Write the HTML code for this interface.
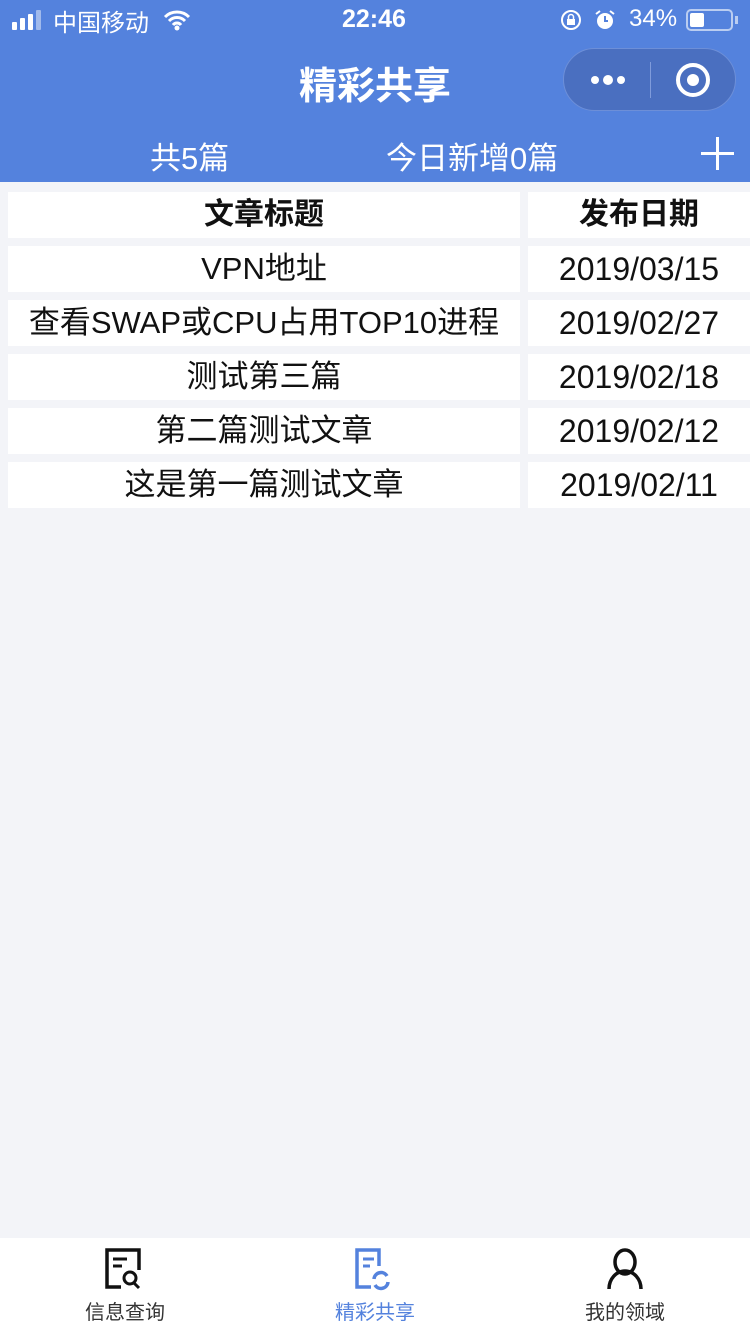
<!DOCTYPE html>
<html><head><meta charset="utf-8"><style>
*{margin:0;padding:0;box-sizing:border-box}
html,body{width:750px;height:1334px;overflow:hidden}
body{background:#f3f4f8;font-family:"Liberation Sans","Noto Sans CJK SC",sans-serif;position:relative}
.hdr{position:absolute;left:0;top:0;width:750px;height:182px;background:#5482dd;color:#fff}
.abs{position:absolute}
.row{position:absolute;left:0;width:750px;height:46px}
.c1{position:absolute;left:8px;width:512px;height:46px;background:#fff;text-align:center;line-height:46px;font-size:31px;color:#111;white-space:nowrap}
.c2{position:absolute;left:528px;width:222px;height:46px;background:#fff;text-align:center;line-height:46px;font-size:32px;color:#111}
.b{font-weight:bold;font-size:30px}
.tab{position:absolute;top:1238px;left:0;width:750px;height:96px;background:#fff}
.lbl{position:absolute;top:58px;font-size:20px;width:150px;text-align:center}
</style></head><body>
<div class="hdr">
 <div class="abs" style="left:12px;top:10px;display:flex;align-items:flex-end;gap:3px;height:20px">
  <div style="width:5px;height:8px;background:#fff;border-radius:1px"></div><div style="width:5px;height:12px;background:#fff;border-radius:1px"></div><div style="width:5px;height:16px;background:#fff;border-radius:1px"></div><div style="width:5px;height:20px;background:rgba(255,255,255,.45);border-radius:1px"></div>
 </div>
 <div class="abs" style="left:53px;top:3px;font-size:24px">中国移动</div>
 <svg class="abs" style="left:163px;top:9px" width="28" height="22" viewBox="0 0 28 22"><path d="M2 8a17 17 0 0 1 24 0M6 12a11 11 0 0 1 16 0M10 16a5 5 0 0 1 8 0" stroke="#fff" stroke-width="3" fill="none"/><circle cx="14" cy="19" r="2.5" fill="#fff"/></svg>
 <div class="abs" style="left:342px;top:5px;font-size:25px;font-weight:bold">22:46</div>
 <svg class="abs" style="left:560px;top:9px" width="22" height="22"><circle cx="11" cy="11" r="9" stroke="#fff" stroke-width="2" fill="none"/><rect x="7" y="10" width="8" height="6" fill="#fff"/><path d="M8.5 10V8a2.5 2.5 0 0 1 5 0v2" stroke="#fff" stroke-width="1.5" fill="none"/></svg>
 <svg class="abs" style="left:594px;top:9px" width="22" height="22"><circle cx="11" cy="12" r="8" fill="#fff"/><path d="M11 7v5h3" stroke="#5482dd" stroke-width="2" fill="none"/><path d="M2 5l4-3M20 5l-4-3" stroke="#fff" stroke-width="2"/></svg>
 <div class="abs" style="left:629px;top:5px;font-size:24px">34%</div>
 <div class="abs" style="left:686px;top:9px;width:47px;height:22px;border:2px solid rgba(255,255,255,.6);border-radius:5px"><div style="margin:2px;width:14px;height:14px;background:#fff;border-radius:2px"></div></div>
 <div class="abs" style="left:735px;top:16px;width:3px;height:8px;background:rgba(255,255,255,.6)"></div>
 <div class="abs" style="left:0;width:750px;top:55px;text-align:center;font-size:38px;font-weight:bold">精彩共享</div>
 <div class="abs" style="left:563px;top:48px;width:173px;height:63px;border-radius:32px;background:#4a6fc0;border:1px solid #6d8fd8">
  <div class="abs" style="left:27px;top:27px;width:8px;height:8px;border-radius:50%;background:#fff;box-shadow:13px 0 0 1px #fff,26px 0 0 #fff"></div>
  <div class="abs" style="left:86px;top:13px;width:1px;height:36px;background:#7f9bdb"></div>
  <div class="abs" style="left:112px;top:14px;width:34px;height:34px;border-radius:50%;border:4px solid #fff"><div style="margin:7px;width:12px;height:12px;border-radius:50%;background:#fff"></div></div>
 </div>
 <div class="abs" style="left:150px;top:133px;font-size:31px">共5篇</div>
 <div class="abs" style="left:386px;top:133px;font-size:31px">今日新增0篇</div>
 <div class="abs" style="left:701px;top:152px;width:33px;height:3px;background:#fff"></div>
 <div class="abs" style="left:716px;top:137px;width:3px;height:33px;background:#fff"></div>
</div>
<div class="row" style="top:192px"><div class="c1 b">文章标题</div><div class="c2 b">发布日期</div></div>
<div class="row" style="top:246px"><div class="c1">VPN地址</div><div class="c2">2019/03/15</div></div>
<div class="row" style="top:300px"><div class="c1">查看SWAP或CPU占用TOP10进程</div><div class="c2">2019/02/27</div></div>
<div class="row" style="top:354px"><div class="c1">测试第三篇</div><div class="c2">2019/02/18</div></div>
<div class="row" style="top:408px"><div class="c1">第二篇测试文章</div><div class="c2">2019/02/12</div></div>
<div class="row" style="top:462px"><div class="c1">这是第一篇测试文章</div><div class="c2">2019/02/11</div></div>
<div class="tab">
 <svg class="abs" style="left:104px;top:9px" width="42" height="46" viewBox="0 0 42 46"><path d="M17 40H3V3h32v20" stroke="#111" stroke-width="3.5" fill="none"/><path d="M9 12h14M9 19h9" stroke="#111" stroke-width="3"/><circle cx="26" cy="31" r="6" stroke="#111" stroke-width="3" fill="none"/><path d="M30 36l5 5" stroke="#111" stroke-width="3"/></svg>
 <svg class="abs" style="left:354px;top:9px" width="42" height="46" viewBox="0 0 42 46"><path d="M17 40H3V3h22v16" stroke="#5482dd" stroke-width="3.5" fill="none"/><path d="M9 12h11M9 19h7" stroke="#5482dd" stroke-width="3"/><path d="M20 32a7 7 0 0 1 13-3M34 35a7 7 0 0 1-13 3" stroke="#5482dd" stroke-width="3.5" fill="none"/></svg>
 <svg class="abs" style="left:604px;top:9px" width="42" height="46" viewBox="0 0 42 46"><ellipse cx="21" cy="15" rx="10" ry="12" stroke="#111" stroke-width="3.5" fill="none"/><path d="M5 42a16 18 0 0 1 32 0" stroke="#111" stroke-width="3.5" fill="none"/></svg>
 <div class="lbl" style="left:50px;color:#333">信息查询</div>
 <div class="lbl" style="left:300px;color:#5482dd">精彩共享</div>
 <div class="lbl" style="left:550px;color:#333">我的领域</div>
</div>
</body></html>
